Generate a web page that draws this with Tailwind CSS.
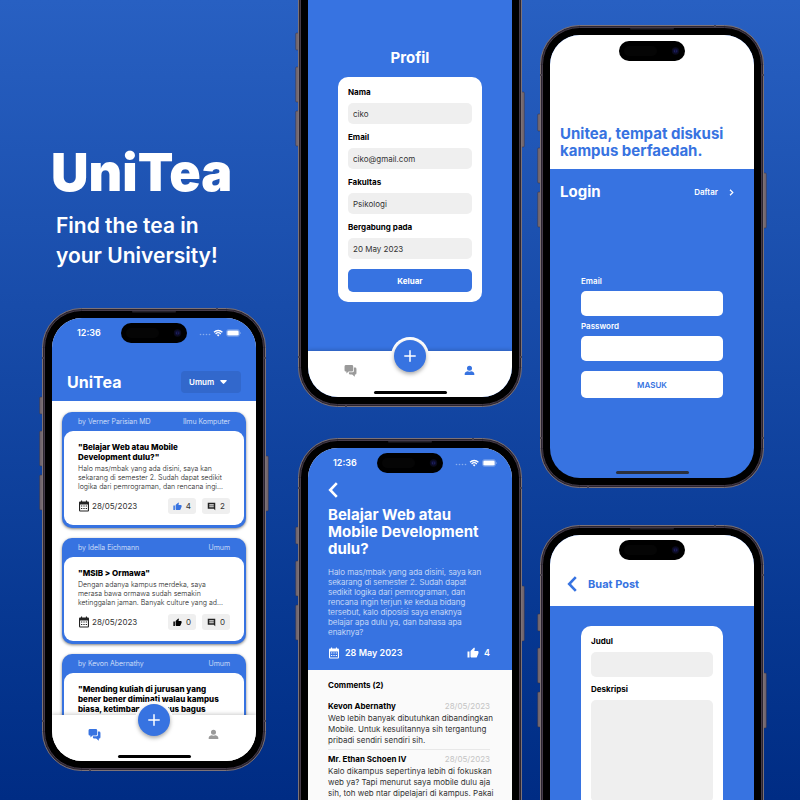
<!DOCTYPE html>
<html lang="id">
<head>
<meta charset="utf-8">
<meta name="viewport" content="width=device-width, initial-scale=1">
<title>UniTea</title>
<script src="https://cdn.jsdelivr.net/npm/@tailwindcss/browser@4"></script>
</head>
<body class="font-['Inter',sans-serif] text-black">

<!-- Shared symbols -->
<svg class="hidden" aria-hidden="true">
  <symbol id="cal" viewBox="0 0 24 24"><path fill="currentColor" d="M6 1h2.200v2h7.600V1H18v2h1.500C20.900 3 22 4.100 22 5.500v15c0 1.400-1.100 2.500-2.500 2.500h-15A2.500 2.500 0 0 1 2 20.500v-15C2 4.100 3.100 3 4.500 3H6zM4.200 9v11.800h15.600V9zM6 11h2.600v2.200H6zm4.700 0h2.600v2.200h-2.600zm4.700 0H18v2.200h-2.600zM6 15.800h2.600V18H6zm4.700 0h2.600V18h-2.600zm4.700 0H18V18h-2.600z"/></symbol>
  <symbol id="like" viewBox="0 0 24 24"><path fill="currentColor" d="M1 21h4V9H1v12zm22-11c0-1.100-.9-2-2-2h-6.310l.950-4.570.030-.320c0-.410-.170-.790-.440-1.060L14.170 1 7.590 7.590C7.220 7.950 7 8.450 7 9v10c0 1.100.9 2 2 2h9c.830 0 1.540-.5 1.840-1.220l3.020-7.050c.090-.230.140-.470.140-.730v-2z"/></symbol>
  <symbol id="comment" viewBox="0 0 24 24"><path fill="currentColor" fill-rule="evenodd" d="M2 2h20v20l-4-4H2zM6 6v2h12V6zm0 3v2h12V9zm0 3v2h12v-2z"/></symbol>
  <symbol id="chat" viewBox="0 0 24 24"><path fill="currentColor" d="M3 2h11.500a2.500 2.500 0 0 1 2.500 2.500v7a2.500 2.500 0 0 1-2.500 2.500H8.500L4.500 17.500V14H3.500A2.500 2.500 0 0 1 1 11.500V4.500A2.500 2.500 0 0 1 3 2z"/><path fill="currentColor" d="M18.300 6.500h2.200A2.500 2.500 0 0 1 23 9v8a2.500 2.500 0 0 1-2.500 2.500H20V23.500l-5-4h-3.500A2.500 2.500 0 0 1 9 17v-1.700h6.500a2.800 2.800 0 0 0 2.800-2.800z"/></symbol>
  <symbol id="user" viewBox="0 0 24 24"><path fill="currentColor" d="M12 1.500a5.500 5.500 0 1 1 0 11 5.500 5.500 0 0 1 0-11zM1.500 22v-3c0-3 4-5 6.500-5.300 2.500 1.300 5.500 1.300 8 0 2.500.3 6.500 2.300 6.500 5.300v3z"/></symbol>
  <symbol id="back" viewBox="0 0 10 16"><path fill="none" stroke="currentColor" stroke-width="2.600" d="M8.800 1.200 2.200 8l6.600 6.800"/></symbol>
  <symbol id="plus" viewBox="0 0 12 12"><path stroke="currentColor" stroke-width="1.500" stroke-linecap="round" d="M6 .8v10.400M.8 6h10.400"/></symbol>
  <symbol id="status" viewBox="0 0 42 8">
    <g fill="#fff" fill-opacity=".4"><circle cx="1.500" cy="5.500" r=".8"/><circle cx="4.500" cy="5.500" r=".8"/><circle cx="7.500" cy="5.500" r=".8"/><circle cx="10.500" cy="5.500" r=".8"/></g>
    <path fill="none" stroke="#fff" stroke-width="1.300" d="M15 3.200c2.400-2.300 6-2.300 8.400 0M16.600 4.900c1.500-1.400 3.700-1.400 5.200 0"/><path fill="#fff" d="m19.200 7.400-1.300-1.500c.7-.6 1.900-.6 2.600 0z"/>
    <rect x="27.500" y=".7" width="13" height="6.600" rx="2" fill="none" stroke="#fff" stroke-opacity=".4" stroke-width=".7"/><rect x="28.300" y="1.400" width="11.400" height="5.200" rx="1.400" fill="#fff"/><path fill="#fff" fill-opacity=".5" d="M41 2.900c.9.300.9 1.900 0 2.200z"/>
  </symbol>
  <symbol id="island" viewBox="0 0 66 20"><rect width="66" height="20" rx="10" fill="#000"/><rect x="5" y="5" width="33" height="10" rx="5" fill="#050505"/><circle cx="56.500" cy="10" r="3.700" fill="#0a0a1c"/><circle cx="56.500" cy="10" r="2.400" fill="#10103a"/><circle cx="55.500" cy="10" r=".6" fill="#2e3380"/><circle cx="57.700" cy="10" r=".6" fill="#2e3380"/></symbol>
  <symbol id="hardware" viewBox="0 0 230 463">
    <g fill="#756970" stroke="#3c3540" stroke-width=".5"><rect x=".7" y="89" width="4" height="17" rx="1"/><rect x=".7" y="123" width="4" height="35" rx="1"/><rect x=".7" y="167" width="4" height="35" rx="1"/><rect x="225.300" y="148" width="4" height="55" rx="1"/></g>
    <rect x="3.500" y=".5" width="223" height="462" rx="39" fill="#2a2430" stroke="#7d7276"/>
    <path stroke="#4b434c" stroke-width="2" d="M3 50h2.500M224.500 50h2.500M3 413h2.500M224.500 413h2.500M178 0v2.500M51 460.500v2.500"/>
    <rect x="5.500" y="2.500" width="219" height="458" rx="37" fill="#000" stroke="#453c4a"/>
    <rect x="93" y="3" width="44" height="1.500" rx=".7" fill="#25222a"/>
  </symbol>
</svg>

<main class="h-screen overflow-hidden bg-linear-to-b from-[#2860c2] to-[#002c84]">
  <div class="flex justify-center pl-[6px]">

    <!-- Intro and feed -->
    <section class="mr-8 flex w-[224px] shrink-0 flex-col">
      <header class="h-[308px] pt-[143px] pl-[9px] whitespace-nowrap text-white">
        <h1 class="text-[52px] leading-[60px] font-black">UniTea</h1>
        <p class="mt-2 pl-[5px] text-[21px] leading-[30px] font-semibold">Find the tea in<br>your University!</p>
      </header>

      <article class="relative h-[463px] shrink-0 p-[10px]">
        <svg class="absolute top-0 -left-[3px] h-[463px] w-[230px]" aria-hidden="true"><use href="#hardware"/></svg>
        <div class="relative flex h-full flex-col overflow-hidden rounded-[30px] bg-white">
          <svg class="absolute top-[5px] left-[69px] h-5 w-[66px]" aria-hidden="true"><use href="#island"/></svg>
          <header class="h-[83px] shrink-0 bg-[#3773e1] px-[15px] text-white">
            <div class="flex h-[29px] items-center justify-between pl-[10px] text-[9px] font-semibold"><span>12:36</span><svg class="h-2 w-[42px]" aria-hidden="true"><use href="#status"/></svg></div>
            <div class="mt-6 flex h-[22px] items-center justify-between">
              <h2 class="text-[16px] leading-[22px] font-bold">UniTea</h2>
              <div class="relative flex">
                <select aria-label="Fakultas" class="h-[22px] w-[60px] appearance-none rounded-[4px] bg-[#3268cc] pl-2 text-[8px] font-semibold"><option>Umum</option></select>
                <svg class="pointer-events-none absolute top-[9px] right-[14px] h-1 w-[7px]" viewBox="0 0 7 4" aria-hidden="true"><path fill="#fff" d="M.9 0h5.200c.7 0 .9.700.5 1.100L4.200 3.600a1 1 0 0 1-1.400 0L.4 1.100C0 .7.2 0 .9 0z"/></svg>
              </div>
            </div>
          </header>

          <div class="flex min-h-0 flex-1 flex-col gap-[10px] overflow-hidden px-[10px] pt-[11px] whitespace-nowrap">
            <section class="shrink-0 rounded-[10px] bg-[#3773e1] px-[2px] pb-[3px] shadow-[0_1px_3px_rgba(0,0,0,0.5)]">
              <div class="flex h-[19px] items-center justify-between px-[14px] pt-[2px] text-[7px] font-light text-white/85"><span>by Verner Parisian MD</span><span>Ilmu Komputer</span></div>
              <div class="rounded-[9px] bg-white px-[14px] py-[11px]">
                <h3 class="text-[8px] leading-[10px] font-extrabold">"Belajar Web atau Mobile<br>Development dulu?"</h3>
                <p class="mt-[2px] text-[7px] leading-[9px] font-light text-[#222]">Halo mas/mbak yang ada disini, saya kan<br>sekarang di semester 2. Sudah dapat sedikit<br>logika dari pemrograman, dan rencana ingi...</p>
                <div class="mt-[7px] flex h-4 items-center gap-[6px] text-[8px] text-[#333]">
                  <svg class="h-3 w-3 text-[#222]" aria-hidden="true"><use href="#cal"/></svg><span class="-ml-1 flex-1">28/05/2023</span>
                  <button class="flex h-4 w-7 items-center justify-between rounded-[3px] bg-[#efefef] px-[5px]"><svg class="h-[9px] w-[9px] text-[#3773e1]" aria-hidden="true"><use href="#like"/></svg>4</button>
                  <button class="flex h-4 w-7 items-center justify-between rounded-[3px] bg-[#efefef] px-[5px]"><svg class="h-[9px] w-[9px] text-[#222]" aria-hidden="true"><use href="#comment"/></svg>2</button>
                </div>
              </div>
            </section>
            <section class="shrink-0 rounded-[10px] bg-[#3773e1] px-[2px] pb-[3px] shadow-[0_1px_3px_rgba(0,0,0,0.5)]">
              <div class="flex h-[19px] items-center justify-between px-[14px] pt-[2px] text-[7px] font-light text-white/85"><span>by Idella Eichmann</span><span>Umum</span></div>
              <div class="rounded-[9px] bg-white px-[14px] py-[11px]">
                <h3 class="text-[8px] leading-[10px] font-extrabold">"MSIB &gt; Ormawa"</h3>
                <p class="mt-[2px] text-[7px] leading-[9px] font-light text-[#222]">Dengan adanya kampus merdeka, saya<br>merasa bawa ormawa sudah semakin<br>ketinggalan jaman. Banyak culture yang ad...</p>
                <div class="mt-[7px] flex h-4 items-center gap-[6px] text-[8px] text-[#333]">
                  <svg class="h-3 w-3 text-[#222]" aria-hidden="true"><use href="#cal"/></svg><span class="-ml-1 flex-1">28/05/2023</span>
                  <button class="flex h-4 w-7 items-center justify-between rounded-[3px] bg-[#efefef] px-[5px]"><svg class="h-[9px] w-[9px] text-black" aria-hidden="true"><use href="#like"/></svg>0</button>
                  <button class="flex h-4 w-7 items-center justify-between rounded-[3px] bg-[#efefef] px-[5px]"><svg class="h-[9px] w-[9px] text-[#222]" aria-hidden="true"><use href="#comment"/></svg>0</button>
                </div>
              </div>
            </section>
            <section class="shrink-0 rounded-[10px] bg-[#3773e1] px-[2px] pb-[3px] shadow-[0_1px_3px_rgba(0,0,0,0.5)]">
              <div class="flex h-[19px] items-center justify-between px-[14px] pt-[2px] text-[7px] font-light text-white/85"><span>by Kevon Abernathy</span><span>Umum</span></div>
              <div class="rounded-[9px] bg-white px-[14px] py-[11px]">
                <h3 class="text-[8px] leading-[10px] font-extrabold">"Mending kuliah di jurusan yang<br>bener bener diminati walau kampus<br>biasa, ketimbang kampus bagus</h3>
              </div>
            </section>
          </div>

          <nav class="relative h-[46px] shrink-0 bg-white shadow-[0_-1px_4px_rgba(0,0,0,0.2)]">
            <div class="absolute -top-[14px] left-1/2 h-[38px] w-[38px] -translate-x-1/2 rounded-full bg-white"></div>
            <div class="relative grid h-[38px] grid-cols-3 place-items-center px-[13px]">
              <a href="#feed" aria-label="Diskusi"><svg class="h-[13px] w-[13px] text-[#3773e1]" aria-hidden="true"><use href="#chat"/></svg></a>
              <button aria-label="Buat post" class="-mt-7 flex h-8 w-8 items-center justify-center rounded-full bg-[#3773e1] text-white shadow-[0_2px_4px_rgba(0,0,0,0.35)]"><svg class="h-3 w-3" aria-hidden="true"><use href="#plus"/></svg></button>
              <a href="#profil" aria-label="Profil"><svg class="h-[11px] w-[11px] text-[#9a9a9a]" aria-hidden="true"><use href="#user"/></svg></a>
            </div>
            <div class="mx-auto mt-[2px] h-[3px] w-[73px] rounded-full bg-black"></div>
          </nav>
        </div>
      </article>
    </section>

    <!-- Profile and discussion -->
    <section class="mr-[18px] flex w-[224px] shrink-0 flex-col gap-[31px]">
      <article class="relative -mt-14 h-[463px] shrink-0 p-[10px]">
        <svg class="absolute top-0 -left-[3px] h-[463px] w-[230px]" aria-hidden="true"><use href="#hardware"/></svg>
        <div class="relative flex h-full flex-col overflow-hidden rounded-[30px] bg-[#3773e1]">
          <div class="flex-1 px-[30px] pt-[94px]">
            <h2 class="text-center text-[15px] leading-5 font-bold text-white">Profil</h2>
            <form class="mt-[9px] flex flex-col rounded-[10px] bg-white p-[10px] text-[8px]">
              <label for="nama" class="leading-[10px] font-bold">Nama</label>
              <input id="nama" value="ciko" class="mt-[6px] mb-2 h-[21px] rounded-[5px] bg-[#efefef] px-[5px] text-[#333]">
              <label for="email" class="leading-[10px] font-bold">Email</label>
              <input id="email" value="ciko@gmail.com" class="mt-[6px] mb-2 h-[21px] rounded-[5px] bg-[#efefef] px-[5px] text-[#333]">
              <label for="fakultas" class="leading-[10px] font-bold">Fakultas</label>
              <input id="fakultas" value="Psikologi" class="mt-[6px] mb-2 h-[21px] rounded-[5px] bg-[#efefef] px-[5px] text-[#333]">
              <label for="gabung" class="leading-[10px] font-bold">Bergabung pada</label>
              <input id="gabung" value="20 May 2023" class="mt-[6px] h-[21px] rounded-[5px] bg-[#efefef] px-[5px] text-[#333]">
              <button type="button" class="mt-[10px] h-[23px] rounded-[5px] bg-[#3773e1] font-bold text-white">Keluar</button>
            </form>
          </div>
          <nav class="relative h-[46px] shrink-0 bg-white shadow-[0_-1px_4px_rgba(0,0,0,0.2)]">
            <div class="absolute -top-[14px] left-1/2 h-[38px] w-[38px] -translate-x-1/2 rounded-full bg-white"></div>
            <div class="relative grid h-[38px] grid-cols-3 place-items-center px-[13px]">
              <a href="#feed" aria-label="Diskusi"><svg class="h-[13px] w-[13px] text-[#9a9a9a]" aria-hidden="true"><use href="#chat"/></svg></a>
              <button aria-label="Buat post" class="-mt-7 flex h-8 w-8 items-center justify-center rounded-full bg-[#3773e1] text-white shadow-[0_2px_4px_rgba(0,0,0,0.35)]"><svg class="h-3 w-3" aria-hidden="true"><use href="#plus"/></svg></button>
              <a href="#profil" aria-label="Profil"><svg class="h-[11px] w-[11px] text-[#3773e1]" aria-hidden="true"><use href="#user"/></svg></a>
            </div>
            <div class="mx-auto mt-[2px] h-[3px] w-[73px] rounded-full bg-black"></div>
          </nav>
        </div>
      </article>

      <article class="relative h-[463px] shrink-0 p-[10px]">
        <svg class="absolute top-0 -left-[3px] h-[463px] w-[230px]" aria-hidden="true"><use href="#hardware"/></svg>
        <div class="relative flex h-full flex-col overflow-hidden rounded-[30px] bg-[#fafafa] whitespace-nowrap">
          <svg class="absolute top-[5px] left-[69px] h-5 w-[66px]" aria-hidden="true"><use href="#island"/></svg>
          <header class="h-[222px] shrink-0 bg-[#3773e1] pr-[22px] pl-5 text-white">
            <div class="-mr-[7px] flex h-[30px] items-center justify-between pl-[5px] text-[9px] font-semibold"><span>12:36</span><svg class="h-2 w-[42px]" aria-hidden="true"><use href="#status"/></svg></div>
            <a href="#feed" aria-label="Kembali" class="mt-1 block"><svg class="h-4 w-[10px]" aria-hidden="true"><use href="#back"/></svg></a>
            <h2 class="mt-2 text-[15px] leading-[17px] font-bold">Belajar Web atau<br>Mobile Development<br>dulu?</h2>
            <p class="mt-[10px] text-[8px] leading-[10px] font-light text-white/85">Halo mas/mbak yang ada disini, saya kan<br>sekarang di semester 2. Sudah dapat<br>sedikit logika dari pemrograman, dan<br>rencana ingin terjun ke kedua bidang<br>tersebut, kalo diposisi saya enaknya<br>belajar apa dulu ya, dan bahasa apa<br>enaknya?</p>
            <div class="mt-[10px] flex h-3 items-center text-[9px] font-semibold"><svg class="mr-[5px] h-3 w-3" aria-hidden="true"><use href="#cal"/></svg><span class="flex-1">28 May 2023</span><svg class="mr-[5px] h-3 w-3" aria-hidden="true"><use href="#like"/></svg><span>4</span></div>
          </header>
          <div class="pt-[10px] pr-[22px] pl-5 text-[8px]">
            <h3 class="leading-[11px] font-bold">Comments (2)</h3>
            <div class="mt-[9px] border-b border-[#e8e8e8] pb-[3px]">
              <div class="flex justify-between leading-[12px]"><b>Kevon Abernathy</b><span class="text-[#c4c4c4]">28/05/2023</span></div>
              <p class="mt-[1px] leading-[11px] text-[#333]">Web lebih banyak dibutuhkan dibandingkan<br>Mobile. Untuk kesulitannya sih tergantung<br>pribadi sendiri sendiri sih.</p>
            </div>
            <div class="mt-[3px]">
              <div class="flex justify-between leading-[12px]"><b>Mr. Ethan Schoen IV</b><span class="text-[#c4c4c4]">28/05/2023</span></div>
              <p class="mt-[1px] leading-[11px] text-[#333]">Kalo dikampus sepertinya lebih di fokuskan<br>web ya? Tapi menurut saya mobile dulu aja<br>sih, toh web ntar dipelajari di kampus. Pakai</p>
            </div>
          </div>
        </div>
      </article>
    </section>

    <!-- Login and new post -->
    <section class="flex w-[224px] shrink-0 flex-col gap-[37px] pt-[25px]">
      <article class="relative h-[463px] shrink-0 p-[10px]">
        <svg class="absolute top-0 -left-[3px] h-[463px] w-[230px]" aria-hidden="true"><use href="#hardware"/></svg>
        <div class="relative flex h-full flex-col overflow-hidden rounded-[30px] bg-[#3773e1] text-white">
          <svg class="absolute top-[6px] left-[69px] h-5 w-[66px]" aria-hidden="true"><use href="#island"/></svg>
          <h2 class="h-[134px] bg-white px-[10px] pt-[90px] text-[15px] leading-[17px] font-bold whitespace-nowrap text-[#3773e1]">Unitea, tempat diskusi<br>kampus berfaedah.</h2>
          <div class="flex items-center justify-between pt-[13px] pr-5 pl-[10px]">
            <h3 class="text-[15px] leading-5 font-bold">Login</h3>
            <a href="#daftar" class="flex items-center gap-[11px] text-[8px] font-semibold">Daftar<svg class="h-[7px] w-[5px]" viewBox="0 0 5 7" aria-hidden="true"><path fill="none" stroke="#fff" stroke-width="1.200" d="m1 .8 2.800 2.700L1 6.200"/></svg></a>
          </div>
          <form class="mt-[74px] flex flex-1 flex-col px-[31px] text-[8px] font-semibold">
            <label for="login-email" class="leading-[10px]">Email</label>
            <input id="login-email" type="email" class="mt-[5px] h-[25px] rounded-[5px] bg-white px-[5px] text-black">
            <label for="login-password" class="mt-[5px] leading-[10px]">Password</label>
            <input id="login-password" type="password" class="mt-[5px] h-[25px] rounded-[5px] bg-white px-[5px] text-black">
            <button type="button" class="mt-[10px] h-[27px] rounded-[5px] bg-white text-[#3773e1]">MASUK</button>
          </form>
          <div class="mx-auto mb-[4px] h-[3px] w-[73px] rounded-full bg-[#2b303c]"></div>
        </div>
      </article>

      <article class="relative h-[463px] shrink-0 p-[10px]">
        <svg class="absolute top-0 -left-[3px] h-[463px] w-[230px]" aria-hidden="true"><use href="#hardware"/></svg>
        <div class="relative flex h-full flex-col overflow-hidden rounded-[30px] bg-[#3773e1]">
          <svg class="absolute top-[5px] left-[69px] h-5 w-[66px]" aria-hidden="true"><use href="#island"/></svg>
          <header class="flex h-[71px] shrink-0 items-end gap-[11px] bg-white pb-[14px] pl-[17px] text-[#3773e1]">
            <a href="#feed" aria-label="Kembali"><svg class="h-4 w-[10px]" aria-hidden="true"><use href="#back"/></svg></a>
            <h2 class="text-[11px] leading-4 font-bold">Buat Post</h2>
          </header>
          <form class="mx-[31px] mt-5 flex flex-col rounded-[10px] bg-white p-[10px] text-[8px]">
            <label for="judul" class="leading-[11px] font-bold">Judul</label>
            <input id="judul" class="mt-[5px] h-[25px] rounded-[5px] bg-[#efefef] px-[5px]">
            <label for="deskripsi" class="mt-[7px] leading-[11px] font-bold">Deskripsi</label>
            <textarea id="deskripsi" class="mt-[5px] h-[102px] resize-none rounded-[5px] bg-[#efefef] p-[5px]"></textarea>
          </form>
        </div>
      </article>
    </section>
  </div>
</main>
</body>
</html>
